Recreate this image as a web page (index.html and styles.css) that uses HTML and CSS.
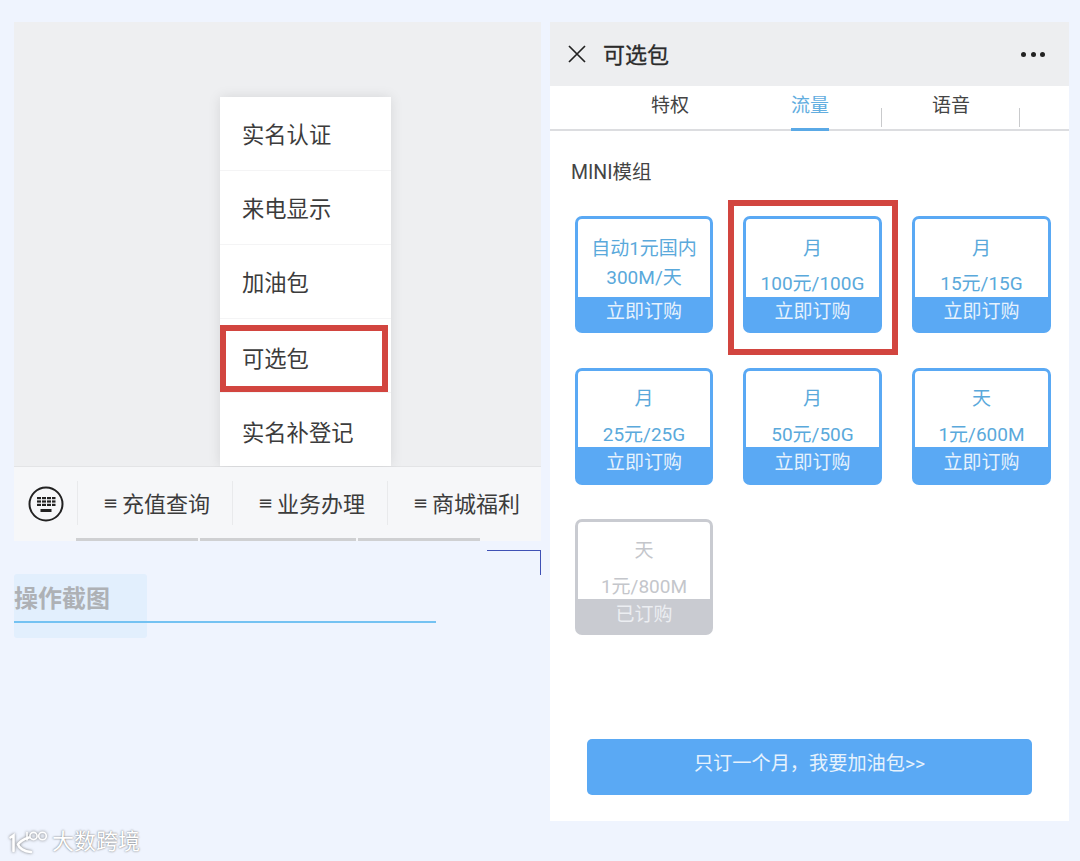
FILE: index.html
```html
<!DOCTYPE html>
<html lang="zh">
<head>
<meta charset="utf-8">
<title>可选包</title>
<link rel="stylesheet" href="styles.css">
</head>
<body>
<div class="page">
  <section class="left">
    <div class="phone">
      <div class="chat">
        <div class="menu">
          <div class="menu-item">实名认证</div>
          <div class="menu-item">来电显示</div>
          <div class="menu-item">加油包</div>
          <div class="menu-item">可选包<span class="mark mark-menu"></span></div>
          <div class="menu-item">实名补登记</div>
        </div>
      </div>
      <div class="bar">
        <div class="kbd">
          <svg width="36" height="36" viewBox="0 0 36 36" fill="none">
            <circle cx="18" cy="18" r="16.5" stroke="#222" stroke-width="2"/>
            <g fill="#222">
              <rect x="9" y="11" width="4" height="2.2"/><rect x="14" y="11" width="4" height="2.2"/><rect x="19" y="11" width="4" height="2.2"/><rect x="24" y="11" width="3.5" height="2.2"/>
              <rect x="9" y="14.4" width="4" height="2.2"/><rect x="14" y="14.4" width="4" height="2.2"/><rect x="19" y="14.4" width="4" height="2.2"/><rect x="24" y="14.4" width="3.5" height="2.2"/>
              <rect x="9" y="17.8" width="4" height="2.2"/><rect x="14" y="17.8" width="4" height="2.2"/><rect x="19" y="17.8" width="4" height="2.2"/><rect x="24" y="17.8" width="3.5" height="2.2"/>
              <rect x="12.5" y="23" width="11" height="3"/>
            </g>
          </svg>
        </div>
        <div class="bar-tab"><span class="ham">≡</span>充值查询</div>
        <div class="bar-tab"><span class="ham">≡</span>业务办理</div>
        <div class="bar-tab"><span class="ham">≡</span>商城福利</div>
        <div class="scroll">
          <i class="s1"></i><i class="s2"></i><i class="s3"></i>
        </div>
      </div>
    </div>
    <div class="corner"></div>
    <div class="caption">
      <div class="caption-box"><span class="caption-text">操作截图</span></div>
      <div class="caption-line"></div>
    </div>
  </section>

  <section class="right">
    <header class="head">
      <svg class="close" width="20" height="20" viewBox="0 0 20 20" fill="none"><path d="M2 2 L18 18 M18 2 L2 18" stroke="#222" stroke-width="1.7"/></svg>
      <div class="title">可选包</div>
      <div class="dots"><i></i><i></i><i></i></div>
    </header>
    <nav class="tabs">
      <div class="tab t1">特权</div>
      <div class="tab t2 active">流量</div>
      <i class="tick k1"></i>
      <div class="tab t3">语音</div>
      <i class="tick k2"></i>
    </nav>
    <div class="section-title">MINI模组</div>
    <div class="cards">
      <div class="card">
        <div class="card-body double"><div>自动1元国内</div><div>300M/天</div></div>
        <div class="card-foot">立即订购</div>
      </div>
      <div class="card">
        <span class="mark mark-card"></span>
        <div class="card-body"><div>月</div><div>100元/100G</div></div>
        <div class="card-foot">立即订购</div>
      </div>
      <div class="card">
        <div class="card-body"><div>月</div><div>15元/15G</div></div>
        <div class="card-foot">立即订购</div>
      </div>
      <div class="card">
        <div class="card-body"><div>月</div><div>25元/25G</div></div>
        <div class="card-foot">立即订购</div>
      </div>
      <div class="card">
        <div class="card-body"><div>月</div><div>50元/50G</div></div>
        <div class="card-foot">立即订购</div>
      </div>
      <div class="card">
        <div class="card-body"><div>天</div><div>1元/600M</div></div>
        <div class="card-foot">立即订购</div>
      </div>
      <div class="card off">
        <div class="card-body"><div>天</div><div>1元/800M</div></div>
        <div class="card-foot">已订购</div>
      </div>
    </div>
    <div class="cta">只订一个月，我要加油包&gt;&gt;</div>
  </section>
</div>
<div class="wm">
  <svg width="44" height="26" viewBox="0 0 44 26" fill="none">
    <g stroke="#fff" stroke-width="2.6" stroke-linecap="round">
      <path d="M2.5 8.5 L5.5 6.5 V22"/>
      <path d="M21 8.5 C15 10 10.5 14 10 15.5 C11 19 16 22.5 23 23"/>
      <path d="M19 3.5 V11" stroke-width="1.6"/>
      <circle cx="25.5" cy="7" r="3.6" stroke-width="1.6"/>
      <circle cx="34.5" cy="7" r="3.8" stroke-width="1.6"/>
    </g>
  </svg>
  <span class="wm-text">大数跨境</span>
</div>
</body>
</html>
```

FILE: styles.css
```css
* { box-sizing: border-box; }
html, body { margin: 0; padding: 0; }
body {
  width: 1080px;
  height: 861px;
  overflow: hidden;
  position: relative;
  background: #eff4fe;
  font-family: Roboto, "Noto Sans CJK SC", "Noto Sans", sans-serif;
}
.page {
  display: flex;
  gap: 9px;
  padding: 22px 0 0 14px;
}

/* left */
.left { position: relative; width: 527px; }
.phone { height: 518px; display: flex; flex-direction: column; }
.chat {
  height: 445px;
  background: #eeeff1;
  border-bottom: 1px solid #e3e4e6;
  padding: 75px 0 0 206px;
}
.menu {
  width: 171px;
  height: 369px;
  background: #fff;
  box-shadow: 0 0 12px rgba(0, 0, 0, .1);
  display: flex;
  flex-direction: column;
}
.menu-item {
  position: relative;
  height: 74px;
  flex: none;
  padding: 0 0 2px 22px;
  display: flex;
  align-items: center;
  font-size: 22.3px;
  color: #3c3c3c;
  border-bottom: 1px solid #f4f4f5;
}
.menu-item:nth-child(4) { padding: 2px 0 0 22px; }
.menu-item:last-child { border-bottom: 0; height: 73px; padding: 2px 0 0 22px; }
.mark { position: absolute; border: 6px solid #d2453f; pointer-events: none; }
.mark-menu { left: 0; top: 6px; width: 168px; height: 67px; }
.bar {
  position: relative;
  flex: 1;
  display: flex;
  align-items: flex-start;
  background: #f6f7f9;
}
.kbd { width: 63px; height: 74px; padding: 19px 0 0 14px; flex: none; }
.bar-tab {
  height: 44px;
  margin-top: 14px;
  width: 155px;
  flex: none;
  border-left: 1px solid #e9eaec;
  padding: 0 0 2px 25px;
  display: flex;
  align-items: center;
  font-size: 22px;
  color: #3c3c3c;
  white-space: nowrap;
}
.ham { font-size: 18px; width: 19px; flex: none; font-family: "DejaVu Sans", sans-serif; }
.scroll { position: absolute; left: 62px; bottom: 0; display: flex; gap: 2px; height: 3px; }
.scroll i { display: block; background: #cfd0d2; height: 3px; }
.s1 { width: 122px; } .s2 { width: 156px; } .s3 { width: 122px; }
.corner {
  position: absolute;
  left: 473px;
  top: 528px;
  width: 54px;
  height: 25px;
  border-top: 1px solid #3f51b5;
  border-right: 1px solid #3f51b5;
}
.caption { position: relative; margin-top: 34px; }
.caption-box {
  width: 133px;
  height: 64px;
  background: #e2effd;
  border-radius: 3px;
  padding-top: 6px;
}
.caption-text {
  font-size: 24px;
  line-height: 38px;
  font-weight: 700;
  color: #aeb1b5;
}
.caption-line {
  position: absolute;
  left: 0;
  top: 47px;
  width: 422px;
  height: 2px;
  background: #74c2f2;
}

/* right */
.right {
  position: relative;
  width: 519px;
  height: 799px;
  background: #fff;
}
.head {
  height: 64px;
  background: #edeef0;
  display: flex;
  align-items: center;
  padding: 0 24px 0 17px;
}
.close { flex: none; }
.title { margin: 0 0 2px 16px; font-size: 22px; font-weight: 400; color: #2b2b2b; -webkit-text-stroke: .3px #2b2b2b; flex: 1; }
.dots { display: flex; gap: 4.5px; }
.dots i { width: 5px; height: 5px; border-radius: 50%; background: #222; display: block; }
.tabs {
  position: relative;
  height: 45px;
  border-bottom: 2px solid #dcdde0;
}
.tab {
  position: absolute;
  top: 7px;
  width: 38px;
  font-size: 19px;
  line-height: 26px;
  color: #444;
  white-space: nowrap;
}
.t1 { left: 101px; }
.t2 { left: 241px; height: 38px; color: #63aee0; }
.t2::after {
  content: "";
  position: absolute;
  left: 0; right: 0; bottom: 0;
  height: 3px;
  background: #5aa9e6;
}
.t3 { left: 382px; }
.tick { position: absolute; top: 22px; width: 1px; height: 19px; background: #c9cacc; }
.k1 { left: 331px; } .k2 { left: 469px; }
.section-title { margin: 29px 0 0 21px; font-size: 19.5px; line-height: 26px; color: #444; }
.cards {
  display: grid;
  grid-template-columns: 138px 139px 139px;
  grid-template-rows: 117px 117px 116px;
  column-gap: 30px;
  margin: 30px 0 0 25px;
  row-gap: 34.5px;
}
.card {
  position: relative;
  display: flex;
  flex-direction: column;
  border: 3px solid #5aa9f4;
  border-radius: 7px;
  background: #fff;
}
.card-body {
  flex: 1;
  overflow: hidden;
  color: #5aa9db;
  font-size: 19px;
  line-height: 26px;
  text-align: center;
  display: flex;
  flex-direction: column;
  gap: 10px;
  padding-top: 15px;
}
.card:nth-child(-n+3) .card-body { padding-top: 17px; gap: 9px; }
.card.off .card-body { padding-top: 16px; }
.card-body.double { gap: 3px !important; }
.card-foot {
  height: 36px;
  flex: none;
  padding-top: 2px;
  background: #5aa9f4;
  color: #e6f2fd;
  font-size: 19px;
  line-height: 28px;
  text-align: center;
  margin: 0 -1px -1px;
  border-radius: 0 0 5px 5px;
}
.card:nth-child(-n+3) .card-foot { height: 34px; line-height: 26px; }
.off { border-color: #c9cbd1; }
.off .card-body { color: #c4c6cb; }
.card.off .card-foot { height: 34px; line-height: 26px; padding-top: 3px; background: #c9cbd1; color: #eceef2; }
.mark-card { left: -18px; top: -19px; width: 170px; height: 155px; }
.cta {
  position: absolute;
  left: 37px;
  top: 717px;
  width: 445px;
  height: 56px;
  border-radius: 5px;
  background: #5aa9f4;
  color: #e6f2fd;
  font-size: 19.2px;
  line-height: 49px;
  text-align: center;
}

/* watermark */
.wm {
  position: absolute;
  left: 8px;
  top: 827px;
  display: flex;
  align-items: center;
}
.wm svg { filter: drop-shadow(0 0 1.5px rgba(90, 90, 90, .8)); }
.wm-text {
  font-size: 22px;
  line-height: 30px;
  color: #fff;
  text-shadow: 0 0 2px rgba(80, 80, 80, .9);
}
```
